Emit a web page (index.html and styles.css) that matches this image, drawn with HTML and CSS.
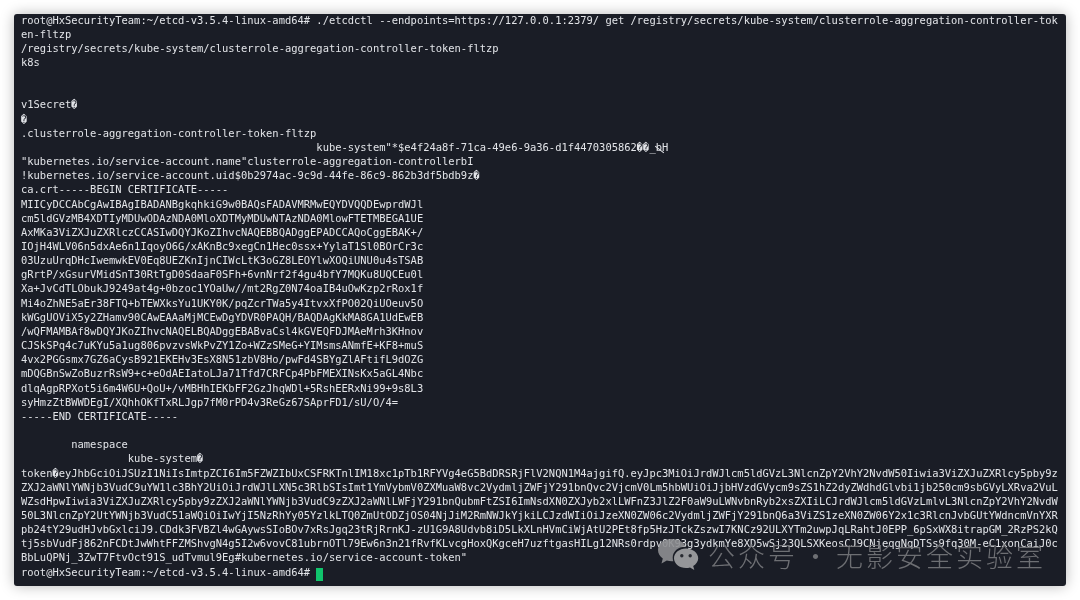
FILE: index.html
```html
<!DOCTYPE html>
<html lang="en">
<head>
<meta charset="utf-8">
<title>etcdctl terminal</title>
<link rel="stylesheet" href="styles.css">
</head>
<body>
<main class="terminal">
<pre class="output">root@HxSecurityTeam:~/etcd-v3.5.4-linux-amd64# ./etcdctl --endpoints=https://127.0.0.1:2379/ get /registry/secrets/kube-system/clusterrole-aggregation-controller-tok
en-fltzp
/registry/secrets/kube-system/clusterrole-aggregation-controller-token-fltzp
k8s


v1Secret&#xFFFD;
&#xFFFD;
.clusterrole-aggregation-controller-token-fltzp
                                               kube-system"*$e4f24a8f-71ca-49e6-9a36-d1f4470305862&#xFFFD;&#xFFFD;_<span class="glitch">b</span>H
"kubernetes.io/service-account.name"clusterrole-aggregation-controllerbI
!kubernetes.io/service-account.uid$0b2974ac-9c9d-44fe-86c9-862b3df5bdb9z&#xFFFD;
ca.crt-----BEGIN CERTIFICATE-----
MIICyDCCAbCgAwIBAgIBADANBgkqhkiG9w0BAQsFADAVMRMwEQYDVQQDEwprdWJl
cm5ldGVzMB4XDTIyMDUwODAzNDA0MloXDTMyMDUwNTAzNDA0MlowFTETMBEGA1UE
AxMKa3ViZXJuZXRlczCCASIwDQYJKoZIhvcNAQEBBQADggEPADCCAQoCggEBAK+/
IOjH4WLV06n5dxAe6n1IqoyO6G/xAKnBc9xegCn1Hec0ssx+YylaT1Sl0BOrCr3c
03UzuUrqDHcIwemwkEV0Eq8UEZKnIjnCIWcLtK3oGZ8LEOYlwXOQiUNU0u4sTSAB
gRrtP/xGsurVMidSnT30RtTgD0SdaaF0SFh+6vnNrf2f4gu4bfY7MQKu8UQCEu0l
Xa+JvCdTLObukJ9249at4g+0bzoc1YOaUw//mt2RgZ0N74oaIB4uOwKzp2rRox1f
Mi4oZhNE5aEr38FTQ+bTEWXksYu1UKY0K/pqZcrTWa5y4ItvxXfPO02QiUOeuv5O
kWGgUOViX5y2ZHamv90CAwEAAaMjMCEwDgYDVR0PAQH/BAQDAgKkMA8GA1UdEwEB
/wQFMAMBAf8wDQYJKoZIhvcNAQELBQADggEBABvaCsl4kGVEQFDJMAeMrh3KHnov
CJSkSPq4c7uKYu5a1ug806pvzvsWkPvZY1Zo+WZzSMeG+YIMsmsANmfE+KF8+muS
4vx2PGGsmx7GZ6aCysB921EKEHv3EsX8N51zbV8Ho/pwFd4SBYgZlAFtifL9dOZG
mDQGBnSwZoBuzrRsW9+c+eOdAEIatoLJa71Tfd7CRFCp4PbFMEXINsKx5aGL4Nbc
dlqAgpRPXot5i6m4W6U+QoU+/vMBHhIEKbFF2GzJhqWDl+5RshEERxNi99+9s8L3
syHmzZtBWWDEgI/XQhhOKfTxRLJgp7fM0rPD4v3ReGz67SAprFD1/sU/O/4=
-----END CERTIFICATE-----

        namespace
                 kube-system&#xFFFD;
token&#xFFFD;eyJhbGciOiJSUzI1NiIsImtpZCI6Im5FZWZIbUxCSFRKTnlIM18xc1pTb1RFYVg4eG5BdDRSRjFlV2NQN1M4ajgifQ.eyJpc3MiOiJrdWJlcm5ldGVzL3NlcnZpY2VhY2NvdW50Iiwia3ViZXJuZXRlcy5pby9z
ZXJ2aWNlYWNjb3VudC9uYW1lc3BhY2UiOiJrdWJlLXN5c3RlbSIsImt1YmVybmV0ZXMuaW8vc2VydmljZWFjY291bnQvc2VjcmV0Lm5hbWUiOiJjbHVzdGVycm9sZS1hZ2dyZWdhdGlvbi1jb250cm9sbGVyLXRva2VuL
WZsdHpwIiwia3ViZXJuZXRlcy5pby9zZXJ2aWNlYWNjb3VudC9zZXJ2aWNlLWFjY291bnQubmFtZSI6ImNsdXN0ZXJyb2xlLWFnZ3JlZ2F0aW9uLWNvbnRyb2xsZXIiLCJrdWJlcm5ldGVzLmlvL3NlcnZpY2VhY2NvdW
50L3NlcnZpY2UtYWNjb3VudC51aWQiOiIwYjI5NzRhYy05YzlkLTQ0ZmUtODZjOS04NjJiM2RmNWJkYjkiLCJzdWIiOiJzeXN0ZW06c2VydmljZWFjY291bnQ6a3ViZS1zeXN0ZW06Y2x1c3RlcnJvbGUtYWdncmVnYXR
pb24tY29udHJvbGxlciJ9.CDdk3FVBZl4wGAywsSIoBOv7xRsJgq23tRjRrnKJ-zU1G9A8Udvb8iD5LkXLnHVmCiWjAtU2PEt8fp5HzJTckZszwI7KNCz92ULXYTm2uwpJqLRahtJ0EPP_6pSxWX8itrapGM_2RzPS2kQ
tj5sbVudFj862nFCDtJwWhtFFZMShvgN4g5I2w6vovC81ubrnOTl79Ew6n3n21fRvfKLvcgHoxQKgceH7uzftgasHILg12NRs0rdpv0K93g3ydkmYe8XD5wSj23QLSXKeosCJ9CNjeqgNqDTSs9fq30M-eC1xonCaiJ0c
BbLuQPNj_3ZwT7FtvOct91S_udTvmul9Eg#kubernetes.io/service-account-token"
root@HxSecurityTeam:~/etcd-v3.5.4-linux-amd64# <span class="cursor"> </span></pre>
<div class="watermark">
<svg class="wechat" viewBox="0 0 42 36" aria-hidden="true">
<path class="bubble-back" d="M14 1C6.5 1 1 5.9 1 12c0 3.500 1.900 6.500 4.800 8.600L4.500 25.500l5.300-2.900c1.800.5 3.200.7 5 .7.500 0 1 0 1.500-.1-.4-1.200-.6-2.400-.6-3.700 0-6 5.600-10.700 12.300-10.700h1C27.300 4.300 21.100 1 14 1z"/>
<path class="bubble-front" d="M29 10.500c-6.500 0-12 4.300-12 9.800s5.500 9.800 12 9.800c1.400 0 2.700-.2 4-.6l4.300 2.500-1.100-4c3-1.800 5-4.600 5-7.700 0-5.500-5.700-9.800-12.200-9.800z"/>
<circle class="eye" cx="24.800" cy="17.800" r="1.700"/>
<circle class="eye" cx="33.200" cy="17.800" r="1.700"/>
</svg>
<span class="mark-text">公众号 · 无影安全实验室</span>
</div>
</main>
</body>
</html>
```
FILE: styles.css
```css
html, body {
  margin: 0;
  height: 100%;
  background: #ffffff;
}

body {
  box-sizing: border-box;
  padding: 14px;
  overflow: hidden;
}

.terminal {
  position: relative;
  box-sizing: border-box;
  height: 572px;
  padding: 0 7px;
  overflow: hidden;
  background: #1a1d26;
  border-radius: 3px;
  box-shadow: 0 0 14px rgba(0, 0, 0, 0.28);
}

.output {
  margin: -1.5px 0 0;
  font-family: "DejaVu Sans Mono", "Liberation Mono", monospace;
  font-size: 10.45px;
  line-height: 14.16px;
  color: #e2e4e8;
  white-space: pre;
  filter: blur(0.3px);
}

.glitch {
  position: relative;
}

.glitch::after {
  content: "";
  position: absolute;
  left: -2px;
  top: 8px;
  width: 11px;
  height: 1px;
  background: #e2e4e8;
  transform: rotate(38deg);
}

.cursor {
  display: inline-block;
  width: 6.5px;
  height: 13px;
  vertical-align: -3px;
  background: #10c46c;
}

.watermark {
  position: absolute;
  left: 643px;
  top: 524px;
  display: flex;
  align-items: center;
  gap: 9px;
  opacity: 0.9;
  filter: blur(0.5px);
}

.wechat {
  width: 42px;
  height: 36px;
  flex: none;
}

.bubble-back {
  fill: #8e8f92;
}

.bubble-front {
  fill: #a3a4a6;
}

.eye {
  fill: #2a2c33;
}

.mark-text {
  font-family: "Noto Sans CJK SC", sans-serif;
  font-size: 27px;
  font-weight: 300;
  line-height: 36px;
  letter-spacing: 3px;
  word-spacing: -5px;
  color: #77787c;
  white-space: nowrap;
}
```
